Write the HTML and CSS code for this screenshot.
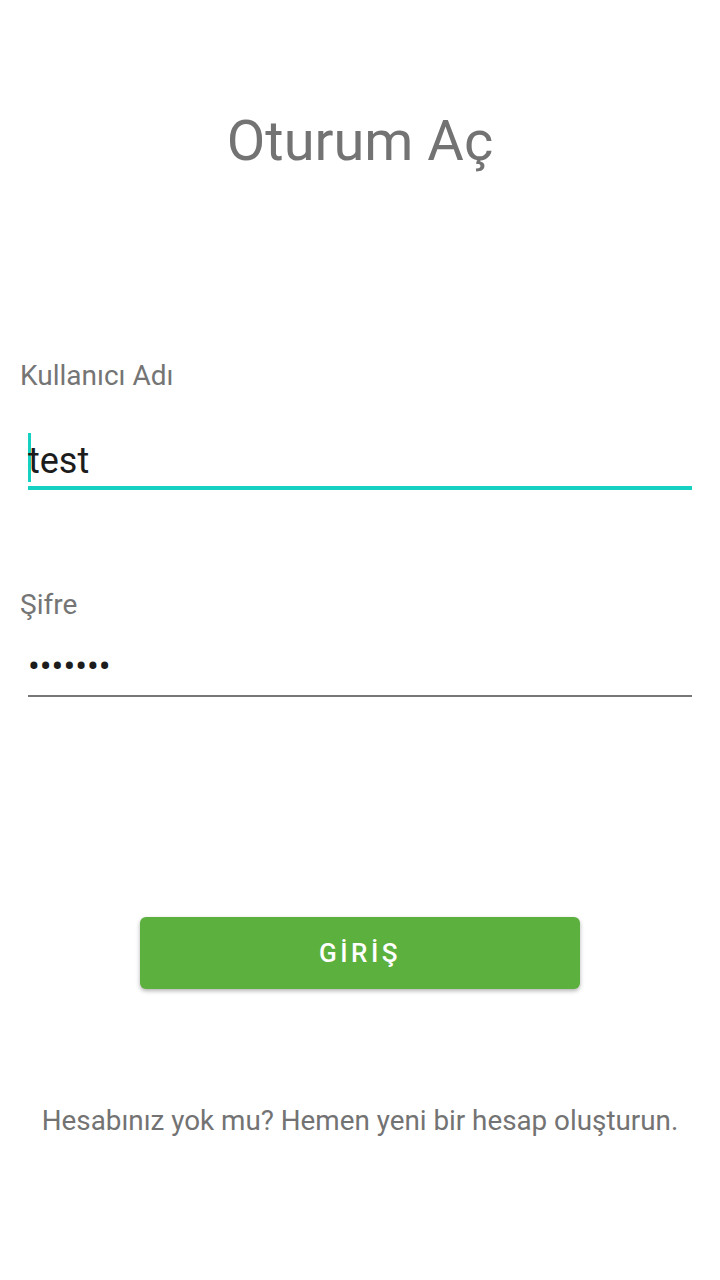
FILE: index.html
```html
<!DOCTYPE html>
<html lang="tr">
<head>
<meta charset="utf-8">
<link rel="stylesheet" href="styles.css">
</head>
<body>
<div class="screen">
  <h1 class="title">Oturum Aç</h1>
  <div class="field field-user">
    <div class="label">Kullanıcı Adı</div>
    <div class="input active"><span class="caret"></span><span class="value">test</span></div>
  </div>
  <div class="field field-pass">
    <div class="label">Şifre</div>
    <div class="input pass"><span class="dots">•••••••</span></div>
  </div>
  <div class="btn-wrap"><button class="btn">GİRİŞ</button></div>
  <p class="footer">Hesabınız yok mu? Hemen yeni bir hesap oluşturun.</p>
</div>
</body>
</html>
```
FILE: styles.css
```css
html, body { margin: 0; padding: 0; background: #fff; }
body { font-family: Roboto, "Noto Sans", sans-serif; }
.screen { width: 720px; height: 1280px; display: flex; flex-direction: column; }
.title {
  margin: 108px 0 0;
  text-align: center;
  font-weight: 400;
  font-size: 56px;
  line-height: 66px;
  color: #737373;
}
.field { padding: 0 28px 0 20px; }
.field-user { margin-top: 186px; }
.field-pass { margin-top: 99px; }
.label { font-size: 28px; line-height: 32px; color: #757575; }
.input { margin-left: 8px; }
.input.active {
  display: flex;
  align-items: flex-start;
  margin-top: 41px;
  height: 53px;
  border-bottom: 4px solid #14d1c2;
}
.caret { width: 3px; height: 49px; background: #14d1c2; margin-right: -3px; flex: none; }
.value { font-size: 36px; color: #1c1c1c; line-height: 49px; margin-top: 4px; }
.input.pass {
  height: 48px;
  padding-top: 26px;
  border-bottom: 2px solid #777;
}
.dots { display: block; font-size: 35px; line-height: 40px; color: #1c1c1c; }
.btn-wrap { display: flex; justify-content: center; margin-top: 220px; }
.btn {
  width: 440px; height: 72px;
  background: #5cb03d;
  border: none; border-radius: 6px;
  color: #fff;
  font-family: Roboto, sans-serif;
  font-weight: 500;
  font-size: 26px;
  letter-spacing: 3.5px;
  box-shadow: 0 2px 4px rgba(0,0,0,0.3);
}
.footer {
  margin: 116px 0 0;
  text-align: center;
  font-size: 27.8px;
  line-height: 32px;
  color: #737373;
}
```
